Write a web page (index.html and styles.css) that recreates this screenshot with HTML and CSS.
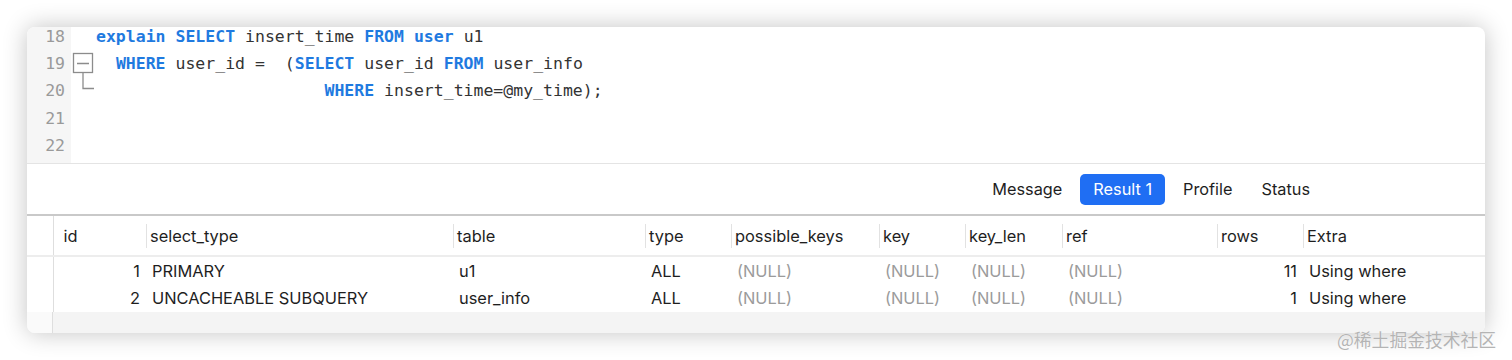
FILE: index.html
```html
<!DOCTYPE html>
<html lang="zh-CN">
<head>
  <meta charset="UTF-8">
  <meta name="viewport" content="width=device-width, initial-scale=1.0">
  <title>explain</title>
  <link rel="stylesheet" href="styles.css">
</head>
<body>
  <div class="page">
    <div class="window">
      <div class="editor">
        <div class="gutter">
          <div>18</div>
          <div>19</div>
          <div>20</div>
          <div>21</div>
          <div>22</div>
        </div>
        <div class="fold">
          <svg viewBox="0 0 25 136" width="25" height="136">
            <rect x="2.5" y="26.5" width="19" height="19" fill="none" stroke="#8c8c8c" stroke-width="1.3"/>
            <path d="M6 36.5h12" stroke="#8c8c8c" stroke-width="1.3"/>
            <path d="M12 46v15.5h11" fill="none" stroke="#8c8c8c" stroke-width="1.3"/>
          </svg>
        </div>
        <div class="code">
          <div class="line"><span class="kw">explain</span> <span class="kw">SELECT</span> <span>insert_time</span> <span class="kw">FROM</span> <span class="kw">user</span> <span>u1</span></div>
          <div class="line">  <span class="kw">WHERE</span> <span>user_id =  (</span><span class="kw">SELECT</span> <span>user_id</span> <span class="kw">FROM</span> <span>user_info</span></div>
          <div class="line">                       <span class="kw">WHERE</span> <span>insert_time=@my_time);</span></div>
          <div class="line"></div>
          <div class="line"></div>
        </div>
      </div>

      <div class="tabs">
        <span class="tab">Message</span>
        <span class="tab active">Result 1</span>
        <span class="tab">Profile</span>
        <span class="tab">Status</span>
      </div>

      <table class="result">
        <colgroup>
          <col class="c-gut">
          <col class="c-id">
          <col class="c-select">
          <col class="c-table">
          <col class="c-type">
          <col class="c-pkeys">
          <col class="c-key">
          <col class="c-keylen">
          <col class="c-ref">
          <col class="c-rows">
          <col>
        </colgroup>
        <thead>
          <tr>
            <th class="gut"></th>
            <th><div class="h first">id</div></th>
            <th><div class="h">select_type</div></th>
            <th><div class="h">table</div></th>
            <th><div class="h">type</div></th>
            <th><div class="h">possible_keys</div></th>
            <th><div class="h">key</div></th>
            <th><div class="h">key_len</div></th>
            <th><div class="h">ref</div></th>
            <th><div class="h">rows</div></th>
            <th><div class="h">Extra</div></th>
          </tr>
        </thead>
        <tbody>
          <tr>
            <td class="gut"></td>
            <td class="num">1</td>
            <td>PRIMARY</td>
            <td>u1</td>
            <td>ALL</td>
            <td class="null">(NULL)</td>
            <td class="null">(NULL)</td>
            <td class="null">(NULL)</td>
            <td class="null">(NULL)</td>
            <td class="num">11</td>
            <td>Using where</td>
          </tr>
          <tr>
            <td class="gut"></td>
            <td class="num">2</td>
            <td>UNCACHEABLE SUBQUERY</td>
            <td>user_info</td>
            <td>ALL</td>
            <td class="null">(NULL)</td>
            <td class="null">(NULL)</td>
            <td class="null">(NULL)</td>
            <td class="null">(NULL)</td>
            <td class="num">1</td>
            <td>Using where</td>
          </tr>
        </tbody>
      </table>
      <div class="filler">
        <div class="filler-gut"></div>
      </div>
    </div>
    <div class="watermark">@稀土掘金技术社区</div>
  </div>
</body>
</html>
```

FILE: styles.css
```css
* {
  margin: 0;
  padding: 0;
  box-sizing: border-box;
}

body {
  background-color: #fff;
  font-family: 'Inter', 'Liberation Sans', sans-serif;
  overflow: hidden;
}

.page {
  position: relative;
  width: 1512px;
  height: 360px;
  padding: 27px 27px 0;
}

.window {
  height: 306px;
  background-color: #fff;
  border-radius: 8px;
  overflow: hidden;
  box-shadow: 0 0 24px rgba(0, 0, 0, 0.24);
}

/* editor */
.editor {
  display: flex;
  height: 137px;
  border-bottom: 1px solid #e4e4e4;
  overflow: hidden;
  font-family: 'DejaVu Sans Mono', monospace;
  font-size: 16.5px;
  line-height: 27.2px;
}

.gutter {
  width: 44px;
  padding: 0 6px 0 0;
  text-align: right;
  color: #9a9a9a;
  background-color: #f6f6f6;
}

.gutter div {
  position: relative;
  top: -4px;
}

.fold {
  width: 25px;
}

.fold svg {
  display: block;
}

.code {
  position: relative;
  top: -4px;
  color: #333;
}

.line {
  height: 27.2px;
  white-space: pre;
}

.kw {
  color: #1f7ae0;
  font-weight: 700;
}

/* tabs */
.tabs {
  display: flex;
  justify-content: flex-end;
  align-items: center;
  gap: 7px;
  height: 52px;
  padding-right: 164px;
  border-bottom: 2px solid #c9c9c9;
  font-size: 16.3px;
  color: #1e1e1e;
}

.tab {
  padding: 0 11px;
  height: 31px;
  line-height: 31px;
  border-radius: 5px;
}

.tab.active {
  padding: 0 13px;
  background-color: #1f6ef3;
  color: #fff;
}

/* result grid */
.result {
  width: 100%;
  border-collapse: collapse;
  table-layout: fixed;
  font-size: 16.4px;
  color: #1e1e1e;
}

.c-gut { width: 26px; }
.c-id { width: 93px; }
.c-select { width: 307px; }
.c-table { width: 192px; }
.c-type { width: 86px; }
.c-pkeys { width: 148px; }
.c-key { width: 86px; }
.c-keylen { width: 97px; }
.c-ref { width: 155px; }
.c-rows { width: 86px; }

.result th {
  height: 40px;
  padding: 0;
  font-weight: 400;
  text-align: left;
  border-bottom: 2px solid #ededed;
}

.result .h {
  height: 24px;
  line-height: 24px;
  padding-left: 3px;
  border-left: 1px solid #e2e2e2;
  white-space: nowrap;
}

.result .h.first {
  padding-left: 10px;
  border-left: none;
}

.result .gut {
  border-right: 1px solid #dedede;
}

.result td {
  height: 28px;
  padding: 0 6px;
  white-space: nowrap;
}

.result td.gut {
  padding: 0;
}

.result td.num {
  text-align: right;
}

.result td.null {
  color: #9b9b9b;
}

.filler {
  display: flex;
  height: 21px;
  background-color: #f4f4f4;
}

.filler-gut {
  width: 26px;
  background-color: #fafafa;
  border-right: 1px solid #dedede;
}

.watermark {
  position: absolute;
  left: 1337px;
  top: 326px;
  font-family: 'Noto Sans CJK SC', sans-serif;
  font-size: 17.8px;
  color: #b4b4b4;
  text-shadow: 0 0 1px #fff;
}
```
